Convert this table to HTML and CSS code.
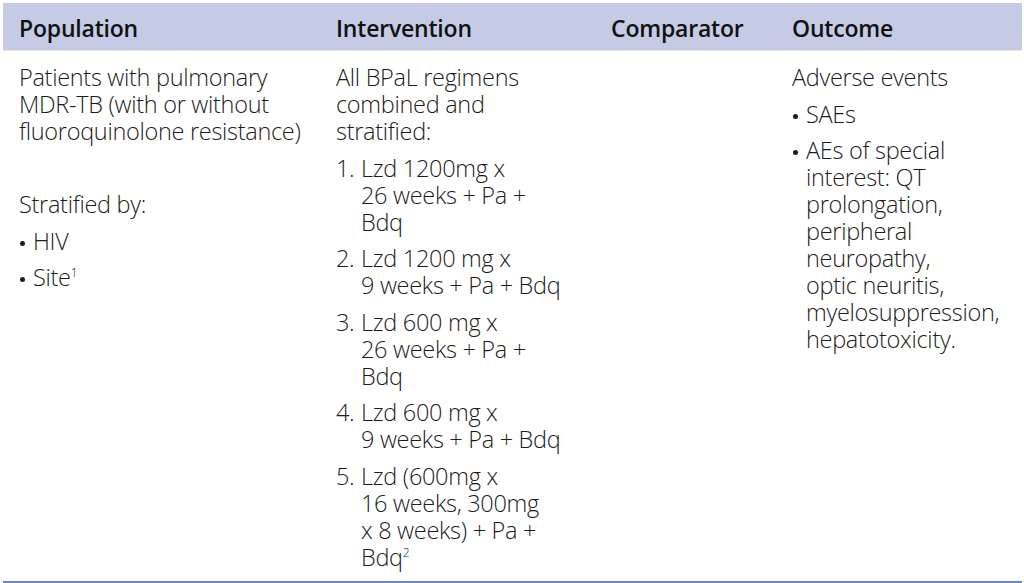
FILE: index.html
```html
<!DOCTYPE html>
<html lang="en">
<head>
<meta charset="utf-8">
<title>PICO table</title>
<link rel="stylesheet" href="styles.css">
</head>
<body>
<div class="pico">
  <div class="row head">
    <div class="cell c1">Population</div>
    <div class="cell c2">Intervention</div>
    <div class="cell c3">Comparator</div>
    <div class="cell c4">Outcome</div>
  </div>
  <div class="row body">
    <div class="cell c1">
      <p>Patients with pulmonary<br>MDR-TB (with or without<br>fluoroquinolone resistance)</p>
      <p class="blank">&nbsp;</p>
      <p>Stratified by:</p>
      <p class="bullet"><span class="mark"></span><span>HIV</span></p>
      <p class="bullet"><span class="mark"></span><span>Site<sup>1</sup></span></p>
    </div>
    <div class="cell c2">
      <p>All BPaL regimens<br>combined and<br>stratified:</p>
      <p class="num"><span class="mark">1.</span><span>Lzd 1200mg x<br>26 weeks + Pa +<br>Bdq</span></p>
      <p class="num"><span class="mark">2.</span><span>Lzd 1200 mg x<br>9 weeks + Pa + Bdq</span></p>
      <p class="num"><span class="mark">3.</span><span>Lzd 600 mg x<br>26 weeks + Pa +<br>Bdq</span></p>
      <p class="num"><span class="mark">4.</span><span>Lzd 600 mg x<br>9 weeks + Pa + Bdq</span></p>
      <p class="num"><span class="mark">5.</span><span>Lzd (600mg x<br>16 weeks, 300mg<br>x 8 weeks) + Pa +<br>Bdq<sup>2</sup></span></p>
    </div>
    <div class="cell c3"></div>
    <div class="cell c4">
      <p>Adverse events</p>
      <p class="bullet"><span class="mark"></span><span>SAEs</span></p>
      <p class="bullet"><span class="mark"></span><span>AEs of special<br>interest: QT<br>prolongation,<br>peripheral<br>neuropathy,<br>optic neuritis,<br>myelosuppression,<br>hepatotoxicity.</span></p>
    </div>
  </div>
</div>
</body>
</html>
```
FILE: styles.css
```css
html, body {
  margin: 0;
  padding: 0;
  background: #ffffff;
}
body {
  font-family: "Open Sans", "Noto Sans", "Liberation Sans", sans-serif;
  color: #1a1a1a;
}
.pico {
  margin: 3px 2px 0 3px;
  border-bottom: 3px solid #6b86c8;
  box-shadow: 0 1px 0 #b9c6e6;
}
.row {
  display: grid;
  grid-template-columns: 317px 275px 181px 1fr;
}
.head {
  background: #c5cbe4;
  height: 47px;
  align-items: center;
  border-bottom: 1px solid #e3e6f1;
}
.head .cell {
  font-weight: 600;
  font-size: 23px;
  color: #111;
  letter-spacing: -0.2px;
  padding-top: 2px;
}
.cell {
  padding: 0 16px;
}
.body .cell {
  padding-top: 13px;
  padding-bottom: 10px;
  font-weight: 300;
  font-size: 23.5px;
  line-height: 27px;
  letter-spacing: -0.3px;
  color: #1c1c1c;
}
.body p {
  margin: 0 0 9.5px 0;
}
.body p:last-child {
  margin-bottom: 0;
}
.bullet, .num {
  display: flex;
}
.bullet .mark {
  width: 14px;
  flex: none;
  position: relative;
}
.bullet .mark::before {
  content: "";
  position: absolute;
  left: 1px;
  top: 13px;
  width: 5px;
  height: 5px;
  border-radius: 50%;
  background: #1c1c1c;
}
.num .mark {
  width: 25px;
  flex: none;
}
sup {
  font-size: 12px;
  line-height: 0;
  vertical-align: 9px;
}
```
